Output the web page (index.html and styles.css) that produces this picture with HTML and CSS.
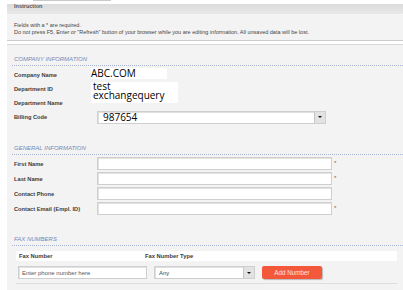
FILE: index.html
```html
<!DOCTYPE html>
<html lang="en">
<head>
    <meta charset="UTF-8">
    <title>Company Profile</title>
    <link rel="stylesheet" href="styles.css">
</head>
<body>
    <div class="topline"></div>
    <div class="page">
        <div class="instr">
            <div class="instr-head">Instruction</div>
            <div class="instr-body">
                Fields with a * are required.<br>
                Do not press F5, Enter or "Refresh" button of your browser while you are editing information. All unsaved data will be lost.
            </div>
        </div>

        <div class="form-panel">
            <section class="group">
                <h2>Company Information</h2>
                <div class="company-grid">
                    <label>Company Name</label>
                    <span class="overlay">ABC.COM</span>
                    <label>Department ID</label>
                    <div class="overlay multi">
                        <span class="line">test</span>
                        <span class="line">exchangequery</span>
                    </div>
                    <label>Department Name</label>
                    <label>Billing Code</label>
                    <div class="select billing">
                        <span class="select-val big">987654</span>
                        <span class="arrow"></span>
                    </div>
                </div>
            </section>

            <section class="group">
                <h2>General Information</h2>
                <div class="general-grid">
                    <label>First Name</label>
                    <input type="text">
                    <span class="req">*</span>
                    <label>Last Name</label>
                    <input type="text">
                    <span class="req">*</span>
                    <label>Contact Phone</label>
                    <input type="text">
                    <span class="req"></span>
                    <label>Contact Email (Empl. ID)</label>
                    <input type="text">
                    <span class="req">*</span>
                </div>
            </section>

            <section class="group">
                <h2>Fax Numbers</h2>
                <div class="fax">
                    <div class="fax-head">
                        <span>Fax Number</span>
                        <span>Fax Number Type</span>
                    </div>
                    <div class="fax-row">
                        <input type="text" class="fax-input" placeholder="Enter phone number here">
                        <div class="select fax-type">
                            <span class="select-val">Any</span>
                            <span class="arrow"></span>
                        </div>
                        <button type="button">Add Number</button>
                    </div>
                </div>
            </section>
        </div>
    </div>
</body>
</html>
```

FILE: styles.css
```css
body { margin: 0; background: #fff; font-family: "Liberation Sans", Arial, sans-serif; color: #3a3a3a; overflow: hidden; }
.topline { height: 1px; width: 78px; margin-left: 33px; background: #c9c9c9; }
.page { padding: 3px 0 0 7px; }

/* instruction box */
.instr-head { height: 10px; background: linear-gradient(#dcdcdc, #e8e8e8); border-bottom: 1px solid #f6f6f6; padding-left: 7px; font-size: 5.5px; font-weight: bold; line-height: 5px; color: #555; overflow: hidden; }
.instr-body { height: 26px; box-sizing: border-box; padding: 7px 0 0 7px; background: #f3f3f3; border-bottom: 1px solid #cdcdcd; font-size: 5.5px; line-height: 6.5px; color: #444; white-space: nowrap; }

/* form */
.form-panel { margin-top: 3px; background: #f3f3f3; border-top: 1px solid #d9d9d9; }
.group { padding: 11px 0 10px 5px; }
.group h2 { margin: 0; padding: 0 0 2px 2px; height: 7px; line-height: 7px; font-size: 6px; font-weight: normal; font-style: italic; text-transform: uppercase; color: #7389b6; border-bottom: 1px dotted #a6b4cf; }

label { font-size: 5.7px; font-weight: bold; color: #3c3c3c; align-self: center; }

.company-grid { margin-top: 2px; padding-left: 2px; display: grid; grid-template-columns: 77px 1fr; grid-auto-rows: 14px; }
.company-grid label:nth-of-type(3) { grid-column: 1; grid-row: 3; }
.company-grid label:nth-of-type(4) { grid-column: 1; grid-row: 4; }
.overlay { align-self: start; justify-self: start; background: #fff; font-family: "Open Sans", sans-serif; font-size: 10px; line-height: 10px; color: #000; width: 76px; height: 11px; }
.overlay.multi { grid-column: 2; grid-row: 2 / span 2; height: 21px; width: auto; padding: 0 14px 0 2px; display: flex; flex-direction: column; }
.overlay .line { display: block; height: 9px; line-height: 9px; }

.select { height: 13px; box-sizing: border-box; border: 1px solid #cfcfcf; box-shadow: inset 1px 1px 0 #e0e0e0; background: #fff; display: flex; align-items: center; }
.select-val { padding-left: 4px; font-size: 6px; color: #444; }
.select-val.big { padding-left: 5px; font-family: "Open Sans", sans-serif; font-size: 10px; color: #000; }
.arrow { margin-left: auto; width: 10px; height: 11px; background: #e2e2e2; border-left: 1px solid #c6c6c6; display: flex; align-items: center; justify-content: center; }
.arrow::after { content: ""; border-left: 2px solid transparent; border-right: 2px solid transparent; border-top: 2px solid #111; }
.billing { grid-column: 2; grid-row: 4; align-self: center; margin-left: 6px; width: 229px; }

.general-grid { margin-top: 2px; padding-left: 2px; display: grid; grid-template-columns: 83px 235px auto; grid-auto-rows: 13px; row-gap: 2px; }
input { height: 13px; box-sizing: border-box; margin: 0; padding: 0 3px; border: 1px solid #cfcfcf; box-shadow: inset 1px 1px 0 #e2e2e2; background: #fff; font-family: "Liberation Sans", Arial, sans-serif; font-size: 6px; outline: none; }
input::placeholder { color: #555; }
.req { padding-left: 2px; font-size: 6px; line-height: 13px; color: #666; }

.fax { margin: 5px 6px 0 4px; }
.fax-head { height: 10px; background: #fff; display: grid; grid-template-columns: 126px 1fr; padding-left: 3px; font-size: 5.8px; font-weight: bold; line-height: 10px; color: #3c3c3c; }
.fax-row { display: flex; gap: 7px; padding: 5px 0 4px 2px; border-bottom: 1px solid #dedede; }
.fax-input { width: 129px; }
.fax-type { width: 101px; }
button { width: 60px; height: 13px; border: none; border-radius: 2px; background: #f4583a; box-shadow: 1px 1px 1px #b9b9b9; color: #ffe3dc; font-family: "Liberation Sans", Arial, sans-serif; font-size: 6.3px; padding: 0; }
```
